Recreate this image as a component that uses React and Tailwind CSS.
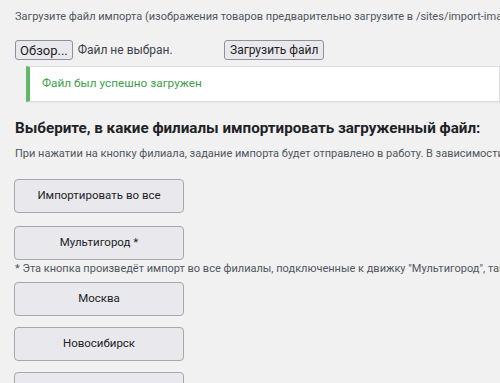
const branches = ['Москва', 'Новосибирск', 'Екатеринбург']

function BranchButton({ children }) {
  return (
    <button className="w-[170px] h-[34px] rounded-[4px] border border-[#a7a7b0] bg-[#e9e9ed] text-[11.5px] text-[#1d2327]">
      {children}
    </button>
  )
}

export default function App() {
  return (
    <div className="w-[500px] h-[383px] overflow-hidden bg-[#f1f1f1] font-['Roboto','Noto_Sans',sans-serif] text-[#3c434a]">
      <div className="pl-[15px] pt-[9px] whitespace-nowrap">
        <p className="text-[11px] leading-[16px] text-[#50575e]">
          Загрузите файл импорта (изображения товаров предварительно загрузите в /sites/import-images/)
        </p>

        <div className="flex items-center mt-[15px] h-[20px]">
          <div className="w-[209px] flex items-center">
            <button className="h-[20px] px-[4px] rounded-[3px] border border-[#8f8f9d] bg-[#e9e9ed] text-[13px] leading-none text-[#1d1d1d]">
              Обзор...
            </button>
            <span className="ml-[5px] text-[12px] text-[#3c434a]">Файл не выбран.</span>
          </div>
          <button className="h-[20px] px-[5px] rounded-[3px] border border-[#8f8f9d] bg-[#e9e9ed] text-[12px] leading-none text-[#1d1d1d]">
            Загрузить файл
          </button>
        </div>

        <div className="ml-[11px] mt-[6px] h-[36px] flex items-center bg-white border border-[#dcdcde] border-l-[4px] border-l-[#5fb86a] pl-[12px] shadow-[0_1px_1px_rgba(0,0,0,0.04)]">
          <span className="text-[11.8px] text-[#3fa04b]">Файл был успешно загружен</span>
        </div>

        <h2 className="mt-[15px] text-[15.2px] leading-[22px] font-bold text-[#1d2327]">
          Выберите, в какие филиалы импортировать загруженный файл:
        </h2>

        <p className="mt-[7px] text-[11px] leading-[16px] text-[#50575e]">
          При нажатии на кнопку филиала, задание импорта будет отправлено в работу. В зависимости от размера файла импорт может занять некоторое время.
        </p>

        <div className="mt-[17px] -ml-[1px] flex flex-col items-start">
          <BranchButton>Импортировать во все</BranchButton>
          <div className="mt-[13px]">
            <BranchButton>Мультигород *</BranchButton>
          </div>
          <p className="ml-[1px] mt-[1px] text-[11px] leading-[16px] text-[#50575e]">
            * Эта кнопка произведёт импорт во все филиалы, подключенные к движку "Мультигород", так же как кнопки ниже.
          </p>
          <div className="mt-[5px] flex flex-col gap-[11px]">
            {branches.map(b => (
              <BranchButton key={b}>{b}</BranchButton>
            ))}
          </div>
        </div>
      </div>
    </div>
  )
}
